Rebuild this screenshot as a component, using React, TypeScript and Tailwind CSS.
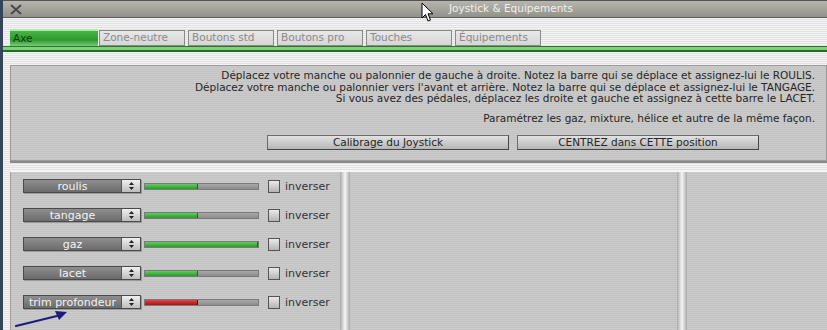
import React from "react";

const tabs = ["Axe", "Zone-neutre", "Boutons std", "Boutons pro", "Touches", "Équipements"];

const axes = [
  { name: "roulis", value: 47, color: "green" },
  { name: "tangage", value: 47, color: "green" },
  { name: "gaz", value: 100, color: "green" },
  { name: "lacet", value: 47, color: "green" },
  { name: "trim profondeur", value: 47, color: "red" },
];

function AxisRow({ name, value, color }: { name: string; value: number; color: string }) {
  return (
    <div className="flex items-center h-[14px]">
      <div className="flex h-[14px] w-[118px] border border-[#4a4a4a] shadow-[1px_1px_0_#9a9a9a]">
        <div className="flex-1 flex items-center justify-center bg-[linear-gradient(to_bottom,#8e8e8e,#6c6c6c)] text-[11px] text-[#f4f4f4] leading-none">
          {name}
        </div>
        <div className="w-[19px] flex items-center justify-center border-l border-[#555] bg-[linear-gradient(to_bottom,#f0f0f0,#bdbdbd)]">
          <svg width="5" height="8" viewBox="0 0 5 8">
            <polygon points="2.5,0 5,3 0,3" fill="#222" />
            <polygon points="0,5 5,5 2.5,8" fill="#222" />
          </svg>
        </div>
      </div>
      <div className="ml-[3px] h-[7px] w-[115px] bg-[linear-gradient(to_bottom,#a8a8a8,#8c8c8c)] border border-[#7a7a7a]">
        <div
          className={
            color === "red"
              ? "h-full bg-[linear-gradient(to_bottom,#e04444,#a81414)] border-r border-[#700]"
              : "h-full bg-[linear-gradient(to_bottom,#5ed05e,#2a9a2a)] border-r border-[#176817]"
          }
          style={{ width: `${value}%` }}
        />
      </div>
      <div className="ml-[9px] w-[12px] h-[13px] border border-[#555] bg-[linear-gradient(to_bottom,#eaeaea,#b4b4b4)]" />
      <span className="ml-[5px] text-[11px] text-[#333] leading-none">inverser</span>
    </div>
  );
}

function Separator() {
  return (
    <div className="w-[10px] shrink-0 bg-[linear-gradient(to_right,#a9a9a9,#f6f6f6_50%,#a9a9a9)]" />
  );
}

export default function App() {
  return (
    <div className="relative w-[827px] h-[330px] overflow-hidden flex flex-col bg-[repeating-linear-gradient(to_bottom,#f4f4f4_0px,#f4f4f4_1px,#e2e2e4_1px,#e2e2e4_2px)] font-['DejaVu_Sans',sans-serif] border-l-[3px] border-[#34445a]">
      {/* title bar */}
      <div className="relative h-[18px] shrink-0 border-t border-[#555] border-b border-b-[#5c5c58] bg-[linear-gradient(to_bottom,#b6b6ae,#92928a)]">
        <svg className="absolute left-[7px] top-[3px]" width="12" height="11" viewBox="0 0 12 11">
          <path d="M1 1 L11 10 M11 1 L1 10" stroke="#4a4a4a" strokeWidth="2" />
        </svg>
        <span className="absolute left-[446px] top-[2px] text-[10.5px] text-[#f0f0f0] leading-none">Joystick &amp; Equipements</span>
      </div>

      {/* tabs */}
      <div className="h-[11px] shrink-0" />
      <div className="flex items-end h-[17px] shrink-0 pl-[7px]">
        {tabs.map((t, i) =>
          i === 0 ? (
            <div
              key={t}
              className="w-[88px] h-[17px] mr-[1px] flex items-center pl-[3px] border-t-2 border-[#a8eca8] bg-[linear-gradient(to_bottom,#48b448,#2e9a2e_60%,#78cc78)] text-[10.5px] text-[#0c3c0c]"
            >
              {t}
            </div>
          ) : (
            <div
              key={t}
              className="w-[86px] h-[16px] mr-[3px] flex items-center pl-[3px] border border-[#8a8a8a] bg-[linear-gradient(to_bottom,#e8e8e8,#d6d6d6)] text-[10.5px] text-[#8a8a8a]"
            >
              {t}
            </div>
          )
        )}
      </div>
      <div className="h-[6px] shrink-0 border-t border-[#2a7a2a] border-b-2 border-b-[#236b23] bg-[#80d080]" />

      {/* instructions panel */}
      <div className="h-[13px] shrink-0" />
      <div className="ml-[7px] h-[96px] shrink-0 border border-[#9a9a9a] shadow-[0_2px_0_#8a8a8a] bg-[repeating-linear-gradient(to_bottom,#cbcbcb_0px,#cbcbcb_1px,#c3c3c3_1px,#c3c3c3_2px)] pr-[11px] pt-[4px] flex flex-col">
        <div className="text-right text-[10.5px] leading-[11.5px] text-[#262626]">
          <div>Déplacez votre manche ou palonnier de gauche à droite. Notez la barre qui se déplace et assignez-lui le ROULIS.</div>
          <div>Déplacez votre manche ou palonnier vers l'avant et arrière. Notez la barre qui se déplace et assignez-lui le TANGAGE.</div>
          <div>Si vous avez des pédales, déplacez les droite et gauche et assignez à cette barre le LACET.</div>
          <div className="mt-[8px]">Paramétrez les gaz, mixture, hélice et autre de la même façon.</div>
        </div>
        <div className="flex mt-[11px] pl-[256px] gap-[8px]">
          {["Calibrage du Joystick", "CENTREZ dans CETTE position"].map((b) => (
            <div
              key={b}
              className="w-[242px] h-[15px] flex items-center justify-center border border-[#6c6c6c] border-r-[#444] border-b-[#444] bg-[linear-gradient(to_bottom,#e2e2e2,#b6b6b6)] text-[10.5px] text-[#262626] leading-none"
            >
              {b}
            </div>
          ))}
        </div>
      </div>

      {/* axes area */}
      <div className="h-[10px] shrink-0" />
      <div className="flex flex-1 ml-[7px] border-t border-[#f8f8f8]">
        <div className="w-[330px] shrink-0 bg-[repeating-linear-gradient(to_bottom,#cbcbcb_0px,#cbcbcb_1px,#c3c3c3_1px,#c3c3c3_2px)] border-l border-[#a0a0a0] pl-[12px] pt-[7px] flex flex-col gap-[15px]">
          {axes.map((a) => (
            <AxisRow key={a.name} {...a} />
          ))}
        </div>
        <Separator />
        <div className="w-[327px] shrink-0 bg-[repeating-linear-gradient(to_bottom,#cbcbcb_0px,#cbcbcb_1px,#c3c3c3_1px,#c3c3c3_2px)]" />
        <Separator />
        <div className="flex-1 bg-[repeating-linear-gradient(to_bottom,#cbcbcb_0px,#cbcbcb_1px,#c3c3c3_1px,#c3c3c3_2px)]" />
      </div>

      {/* annotation arrow */}
      <svg className="absolute left-[10px] top-[308px]" width="60" height="22" viewBox="0 0 60 22">
        <line x1="3" y1="18" x2="48" y2="7" stroke="#1c1c7c" strokeWidth="2.2" strokeLinecap="round" />
        <polygon points="54,4 42,3 46,12" fill="#1c1c7c" />
      </svg>

      {/* mouse cursor */}
      <svg className="absolute left-[418px] top-[2px]" width="14" height="21" viewBox="0 0 14 21">
        <path d="M1 1 L1 16 L4.5 12.5 L7 19 L9.5 18 L7 11.8 L12 11.8 Z" fill="#fff" stroke="#000" strokeWidth="1" strokeLinejoin="round" />
      </svg>
    </div>
  );
}
